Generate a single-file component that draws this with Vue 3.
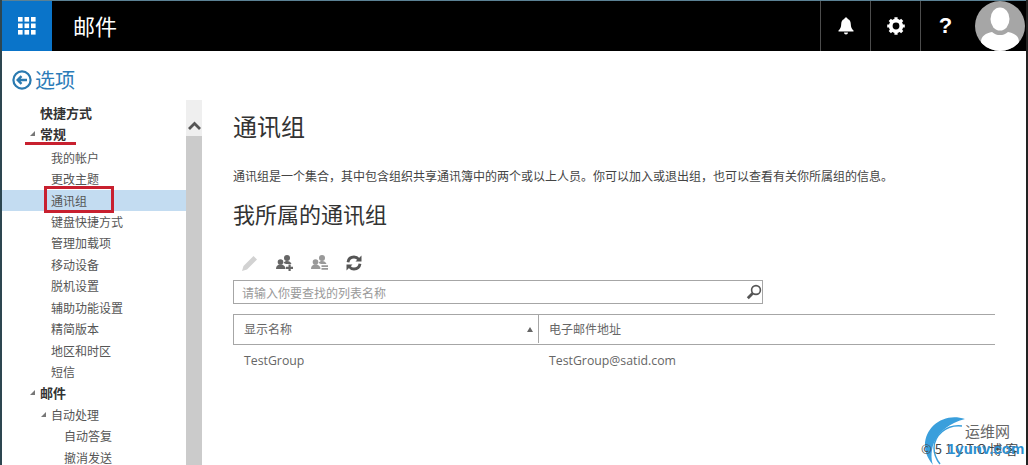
<script setup>
const navItems = [
  { label: '快捷方式', level: 0, bold: true },
  { label: '常规', level: 0, bold: true, arrow: true, gap: true },
  { label: '我的帐户', level: 1 },
  { label: '更改主题', level: 1 },
  { label: '通讯组', level: 1, selected: true },
  { label: '键盘快捷方式', level: 1 },
  { label: '管理加载项', level: 1 },
  { label: '移动设备', level: 1 },
  { label: '脱机设置', level: 1 },
  { label: '辅助功能设置', level: 1 },
  { label: '精简版本', level: 1 },
  { label: '地区和时区', level: 1 },
  { label: '短信', level: 1 },
  { label: '邮件', level: 0, bold: true, arrow: true },
  { label: '自动处理', level: 1, arrow: true },
  { label: '自动答复', level: 2 },
  { label: '撤消发送', level: 2 }
]
</script>

<template>
  <div class="page">
    <header class="topbar">
      <div class="tile">
        <svg width="18" height="18" viewBox="0 0 18 18" fill="#fff">
          <template v-for="y in [0, 6.5, 13]" :key="y">
            <rect v-for="x in [0, 6.5, 13]" :key="x" :x="x" :y="y" width="4.6" height="4.6" />
          </template>
        </svg>
      </div>
      <div class="app-title">邮件</div>
      <div class="top-btn">
        <svg width="16" height="18" viewBox="0 0 16 18" fill="#fff">
          <path d="M8 0.5c1 0 1.6.7 1.7 1.5C12 2.7 12.7 4.8 12.8 7.2c.1 2.8.8 4.600 2.700 6.300v1H.5v-1c1.900-1.700 2.600-3.500 2.700-6.300C3.300 4.800 4 2.700 6.300 2 6.400 1.200 7 .5 8 .5z" />
          <path d="M6 15.500h4c0 1.200-.9 2-2 2s-2-.8-2-2z" />
        </svg>
      </div>
      <div class="top-btn">
        <svg width="18" height="18" viewBox="0 0 18 18">
          <circle cx="9" cy="9" r="5.300" fill="none" stroke="#fff" stroke-width="3.800" />
          <g stroke="#fff" stroke-width="3.200">
            <path d="M9 .2v3.200M9 14.600v3.200M.2 9h3.200M14.600 9h3.200M2.800 2.800l2.200 2.200M13 13l2.200 2.200M15.200 2.800L13 5M5 13l-2.200 2.200" />
          </g>
        </svg>
      </div>
      <div class="top-btn help">?</div>
      <div class="avatar">
        <svg width="50" height="50" viewBox="0 0 50 50">
          <defs>
            <clipPath id="avatar-clip"><circle cx="25" cy="25" r="25" /></clipPath>
          </defs>
          <circle cx="25" cy="25" r="25" fill="#a6a6a6" />
          <g clip-path="url(#avatar-clip)" fill="#fff">
            <ellipse cx="25" cy="18" rx="9.500" ry="11.500" />
            <path d="M6 50v-9c0-6 5-9 11-10 3 2.500 5 3 8 3s5-.5 8-3c6 1 11 4 11 10v9z" />
          </g>
        </svg>
      </div>
    </header>

    <div class="options-head">
      <svg width="20" height="20" viewBox="0 0 20 20" fill="none" stroke="#2a7ab0">
        <circle cx="10" cy="10" r="8.600" stroke-width="2.200" />
        <path d="M15 10H6M9.500 6.200L5.700 10l3.800 3.800" stroke-width="2.400" />
      </svg>
      <span>选项</span>
    </div>

    <div class="workspace">
      <aside class="side">
        <nav class="nav">
          <div
            v-for="item in navItems"
            :key="item.label"
            class="nav-row"
            :class="['lvl' + item.level, { bold: item.bold, selected: item.selected, gap: item.gap }]"
          >
            <i v-if="item.arrow" class="tri"></i>
            <span>{{ item.label }}</span>
          </div>
        </nav>
        <div class="scrollbar">
          <div class="scroll-up">
            <svg width="13" height="9" viewBox="0 0 13 9" fill="none" stroke="#555" stroke-width="2.800">
              <path d="M1 8L6.500 2.500 12 8" />
            </svg>
          </div>
        </div>
      </aside>

      <main class="content">
        <h1>通讯组</h1>
        <p>通讯组是一个集合，其中包含组织共享通讯簿中的两个或以上人员。你可以加入或退出组，也可以查看有关你所属组的信息。</p>
        <h2>我所属的通讯组</h2>

        <div class="toolbar">
          <svg width="18" height="18" viewBox="0 0 18 18" fill="#d2d2d2">
            <path d="M1 17l1.500-5L12.500 2l3.500 3.500L6 15.500z" />
          </svg>
          <svg width="18" height="16" viewBox="0 0 18 16" fill="#666">
            <circle cx="4.500" cy="7" r="2.800" /><path d="M0 14c0-3 1.500-4.500 4.500-4.500S9.500 11 9.500 14z" />
            <circle cx="11" cy="3" r="3" /><path d="M7.500 8c1-1.500 2-2 3.500-2 2.200 0 3.800 1 4.500 3H10z" />
            <path d="M12.500 9.500h2.200v2.300H17V14h-2.300v2h-2.200v-2H10v-2.200h2.500z" />
          </svg>
          <svg width="18" height="16" viewBox="0 0 18 16" fill="#999">
            <circle cx="4.500" cy="7" r="2.800" /><path d="M0 14c0-3 1.500-4.500 4.500-4.500S9.500 11 9.500 14z" />
            <circle cx="11" cy="3" r="3" /><path d="M7.500 8c1-1.500 2-2 3.500-2 2.200 0 3.800 1 4.500 3H10z" />
            <path d="M10.500 10.300H17V12h-6.500zM10.500 13H17v1.700h-6.500z" />
          </svg>
          <svg width="16" height="16" viewBox="0 0 16 16" fill="none" stroke="#555" stroke-width="2.800">
            <path d="M2 7.200C2.500 4 5 2 8 2c2 0 3.600.9 4.800 2.400" />
            <path d="M14 8.800C13.500 12 11 14 8 14c-2 0-3.600-.9-4.800-2.400" />
            <path d="M15.500 .5v6h-6z" fill="#555" stroke="none" />
            <path d="M.5 15.500v-6h6z" fill="#555" stroke="none" />
          </svg>
        </div>

        <div class="search">
          <span>请输入你要查找的列表名称</span>
          <svg width="16" height="16" viewBox="0 0 16 16" fill="none" stroke="#555">
            <circle cx="10" cy="6" r="4.400" stroke-width="1.600" />
            <path d="M6.700 9.300L1.800 14.200" stroke-width="2.800" />
          </svg>
        </div>

        <div class="grid-head">
          <div class="col-name">
            <span>显示名称</span>
            <i class="sort"></i>
          </div>
          <div class="col-mail">电子邮件地址</div>
        </div>
        <div class="grid-row">
          <div class="col-name">TestGroup</div>
          <div class="col-mail">TestGroup@satid.com</div>
        </div>
      </main>
    </div>

    <div class="mark-line"></div>
    <div class="mark-box"></div>

    <div class="watermark">
      <svg width="50" height="53" viewBox="0 0 50 53">
        <path d="M45 7C25 0 5 14 5 33c0 9 4 15 8 20C9 40 12 16 45 7z" fill="#3a9fdc" />
        <path d="M42 14C26 12 14 24 14 36c0 6 2 11 6 16" fill="none" stroke="#3a9fdc" stroke-width="1.500" />
      </svg>
      <span class="wm-top">运维网</span>
      <span class="wm-dark">©51CTO博客</span>
      <span class="wm-blue">1yunv.com</span>
    </div>
  </div>
</template>

<style>
html, body { margin: 0; background: #fff; overflow: hidden; }
</style>

<style scoped>
.page {
  position: relative;
  width: 1028px;
  height: 465px;
  box-sizing: border-box;
  padding: 1px 2px 0;
  overflow: hidden;
  display: flex;
  flex-direction: column;
  background: #fff;
  box-shadow: inset 2px 0 0 #2d4650, inset -2px 0 0 #222, inset 0 1px 0 #5b8194;
  font-family: "Noto Sans CJK SC", "Liberation Sans", sans-serif;
  color: #333;
}
.topbar {
  flex: none;
  height: 50px;
  display: flex;
  align-items: stretch;
  background: #000;
  color: #fff;
}
.tile {
  width: 50px;
  background: #0a74c9;
  display: flex;
  align-items: center;
  justify-content: center;
}
.app-title {
  flex: 1;
  padding-left: 21px;
  font-size: 22px;
  line-height: 48px;
}
.top-btn {
  width: 50px;
  border-left: 1px solid #4d4d4d;
  box-sizing: border-box;
  display: flex;
  align-items: center;
  justify-content: center;
}
.help {
  font-family: "Liberation Sans", sans-serif;
  font-weight: 700;
  font-size: 22px;
}
.avatar {
  width: 56px;
  padding-left: 5px;
  box-sizing: border-box;
}
.avatar svg { display: block; }
.options-head {
  flex: none;
  height: 49px;
  padding-left: 10px;
  padding-top: 8px;
  display: flex;
  align-items: center;
  gap: 3px;
  color: #2c7cb8;
  font-size: 20px;
  box-sizing: border-box;
}
.workspace {
  flex: 1;
  min-height: 0;
  display: flex;
}
.side {
  flex: none;
  width: 200px;
  height: 365px;
  display: flex;
  background: #fff;
}
.nav {
  flex: none;
  width: 184px;
  padding-top: 1.800px;
  font-size: 12px;
  color: #555;
  overflow: hidden;
}
.nav-row {
  position: relative;
  height: 21.450px;
  line-height: 21.450px;
  white-space: nowrap;
}
.gap { margin-bottom: 2px; }
.lvl0 { padding-left: 38px; }
.lvl1 { padding-left: 49px; }
.lvl2 { padding-left: 62px; }
.bold { font-weight: 700; color: #333; font-size: 13px; }
.selected { background: #c3dcf1; }
.tri {
  position: absolute;
  top: 8px;
  margin-left: -10px;
  width: 0;
  height: 0;
  border-left: 5px solid transparent;
  border-bottom: 5px solid #777;
}
.scrollbar {
  flex: none;
  width: 16px;
  background: #cbcbcb;
}
.scroll-up {
  height: 36px;
  box-sizing: border-box;
  padding-bottom: 6px;
  background: #efefef;
  display: flex;
  align-items: flex-end;
  justify-content: center;
}
.content {
  flex: 1;
  min-width: 0;
  padding: 9px 31px 0 31px;
  color: #333;
}
h1 {
  margin: 0;
  font-size: 24px;
  font-weight: 400;
  line-height: 34px;
}
p {
  margin: 24px 0 0;
  font-size: 12px;
  line-height: 18px;
  color: #444;
}
h2 {
  margin: 12px 0 0;
  font-size: 22px;
  font-weight: 400;
  line-height: 32px;
}
.toolbar {
  margin-top: 25px;
  height: 18px;
  padding-left: 8px;
  display: flex;
  align-items: center;
  gap: 17px;
}
.search {
  margin-top: 8px;
  width: 530px;
  height: 24px;
  box-sizing: border-box;
  border: 1px solid #a6a6a6;
  padding: 0 0 0 8px;
  display: flex;
  align-items: center;
  justify-content: space-between;
  color: #999;
  font-size: 12px;
}
.grid-head {
  margin-top: 10px;
  width: 762px;
  height: 31px;
  box-sizing: border-box;
  border-top: 1px solid #a6a6a6;
  border-bottom: 1px solid #a6a6a6;
  border-left: 1px solid #a6a6a6;
  display: flex;
  align-items: center;
  color: #666;
  font-size: 12px;
  line-height: 16px;
  padding-bottom: 1px;
}
.grid-head .col-name {
  height: 100%;
  border-right: 1px solid #a6a6a6;
  box-sizing: border-box;
  display: flex;
  align-items: center;
  justify-content: space-between;
  padding-right: 5px;
}
.col-name {
  width: 305px;
  flex: none;
  padding-left: 10px;
  box-sizing: border-box;
}
.col-mail {
  padding-left: 10px;
}
.sort {
  width: 0;
  height: 0;
  border-left: 3.500px solid transparent;
  border-right: 3.500px solid transparent;
  border-bottom: 5px solid #666;
}
.grid-row {
  width: 762px;
  height: 30px;
  display: flex;
  align-items: center;
  padding-left: 1px;
  box-sizing: border-box;
  font-family: "Open Sans", "Liberation Sans", sans-serif;
  font-size: 12.300px;
  color: #666;
}
.mark-line {
  position: absolute;
  left: 25px;
  top: 142px;
  width: 51px;
  height: 3px;
  background: #c8202f;
}
.mark-box {
  position: absolute;
  left: 44px;
  top: 186px;
  width: 70px;
  height: 27px;
  box-sizing: border-box;
  border: 3px solid #c8202f;
}
.watermark {
  position: absolute;
  left: 920px;
  top: 412px;
  width: 106px;
  height: 53px;
}
.watermark svg { position: absolute; left: 0; top: 0; }
.watermark span { position: absolute; white-space: nowrap; }
.wm-top { left: 45px; top: 9px; font-size: 15px; line-height: 20px; color: #666; }
.wm-dark { left: 1px; top: 28px; font-size: 13px; line-height: 18px; letter-spacing: 3px; color: #444; }
.wm-blue {
  left: 27px;
  top: 28px;
  font-family: "Liberation Sans", sans-serif;
  font-weight: 700;
  font-size: 15px;
  line-height: 18px;
  color: #2d8fd0;
}
</style>
